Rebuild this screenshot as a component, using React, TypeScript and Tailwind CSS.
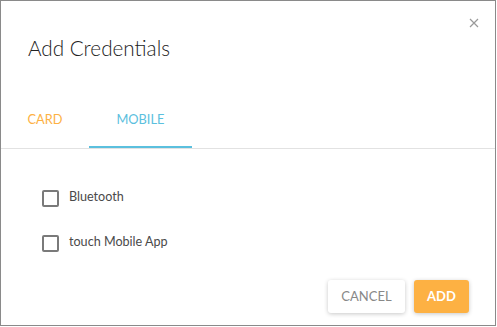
import React from "react";

export default function App() {
  return (
    <div className="w-[497px] h-[327px] bg-white">
      <div className="relative w-[496px] h-[326px] border border-[#8a8a8a] bg-white flex flex-col font-['Lato','Noto_Sans',sans-serif]">
        <button className="absolute right-[15px] top-[16px] w-[12px] h-[12px] flex items-center justify-center">
          <svg width="10" height="10" viewBox="0 0 10 10">
            <path d="M1 1 L9 9 M9 1 L1 9" stroke="#9a9a9a" strokeWidth="1.2" fill="none" />
          </svg>
        </button>
        <div className="pt-[35px] pl-[27px]">
          <h2 className="text-[20.7px] leading-[24px] text-[#222222] font-light">Add Credentials</h2>
        </div>
        <div className="mt-[40px] flex border-b border-[#e2e2e2]">
          <div className="px-[26.5px] pt-[11px] pb-[19px] border-b-2 border-transparent text-[12.8px] leading-[16px] text-[#fdb143]">
            CARD
          </div>
          <div className="px-[27.5px] pt-[11px] pb-[19px] border-b-2 border-[#5bc0de] text-[12.8px] leading-[16px] text-[#5bc0de]">
            MOBILE
          </div>
        </div>
        <div className="flex-1 pl-[41px] pt-[39px] flex flex-col gap-[26px]">
          <label className="flex items-start gap-[10px]">
            <span className="mt-[2px] w-[17px] h-[17px] border-2 border-[#7a7a7a] rounded-[2px]" />
            <span className="pt-[1px] text-[12.6px] leading-[16px] text-[#4a4a4a]">Bluetooth</span>
          </label>
          <label className="flex items-start gap-[10px]">
            <span className="mt-[2px] w-[17px] h-[17px] border-2 border-[#7a7a7a] rounded-[2px]" />
            <span className="pt-[1px] text-[12.6px] leading-[16px] text-[#4a4a4a]">touch Mobile App</span>
          </label>
        </div>
        <div className="flex justify-end gap-[9px] pr-[26px] pb-[12px]">
          <button className="w-[77px] h-[33px] rounded-[3px] bg-white shadow-[0_1px_4px_rgba(0,0,0,0.22)] text-[13px] text-[#888888]">
            CANCEL
          </button>
          <button className="w-[55px] h-[33px] rounded-[3px] bg-[#fdb143] shadow-[0_1px_4px_rgba(0,0,0,0.22)] text-[13px] font-bold text-white">
            ADD
          </button>
        </div>
      </div>
    </div>
  );
}
